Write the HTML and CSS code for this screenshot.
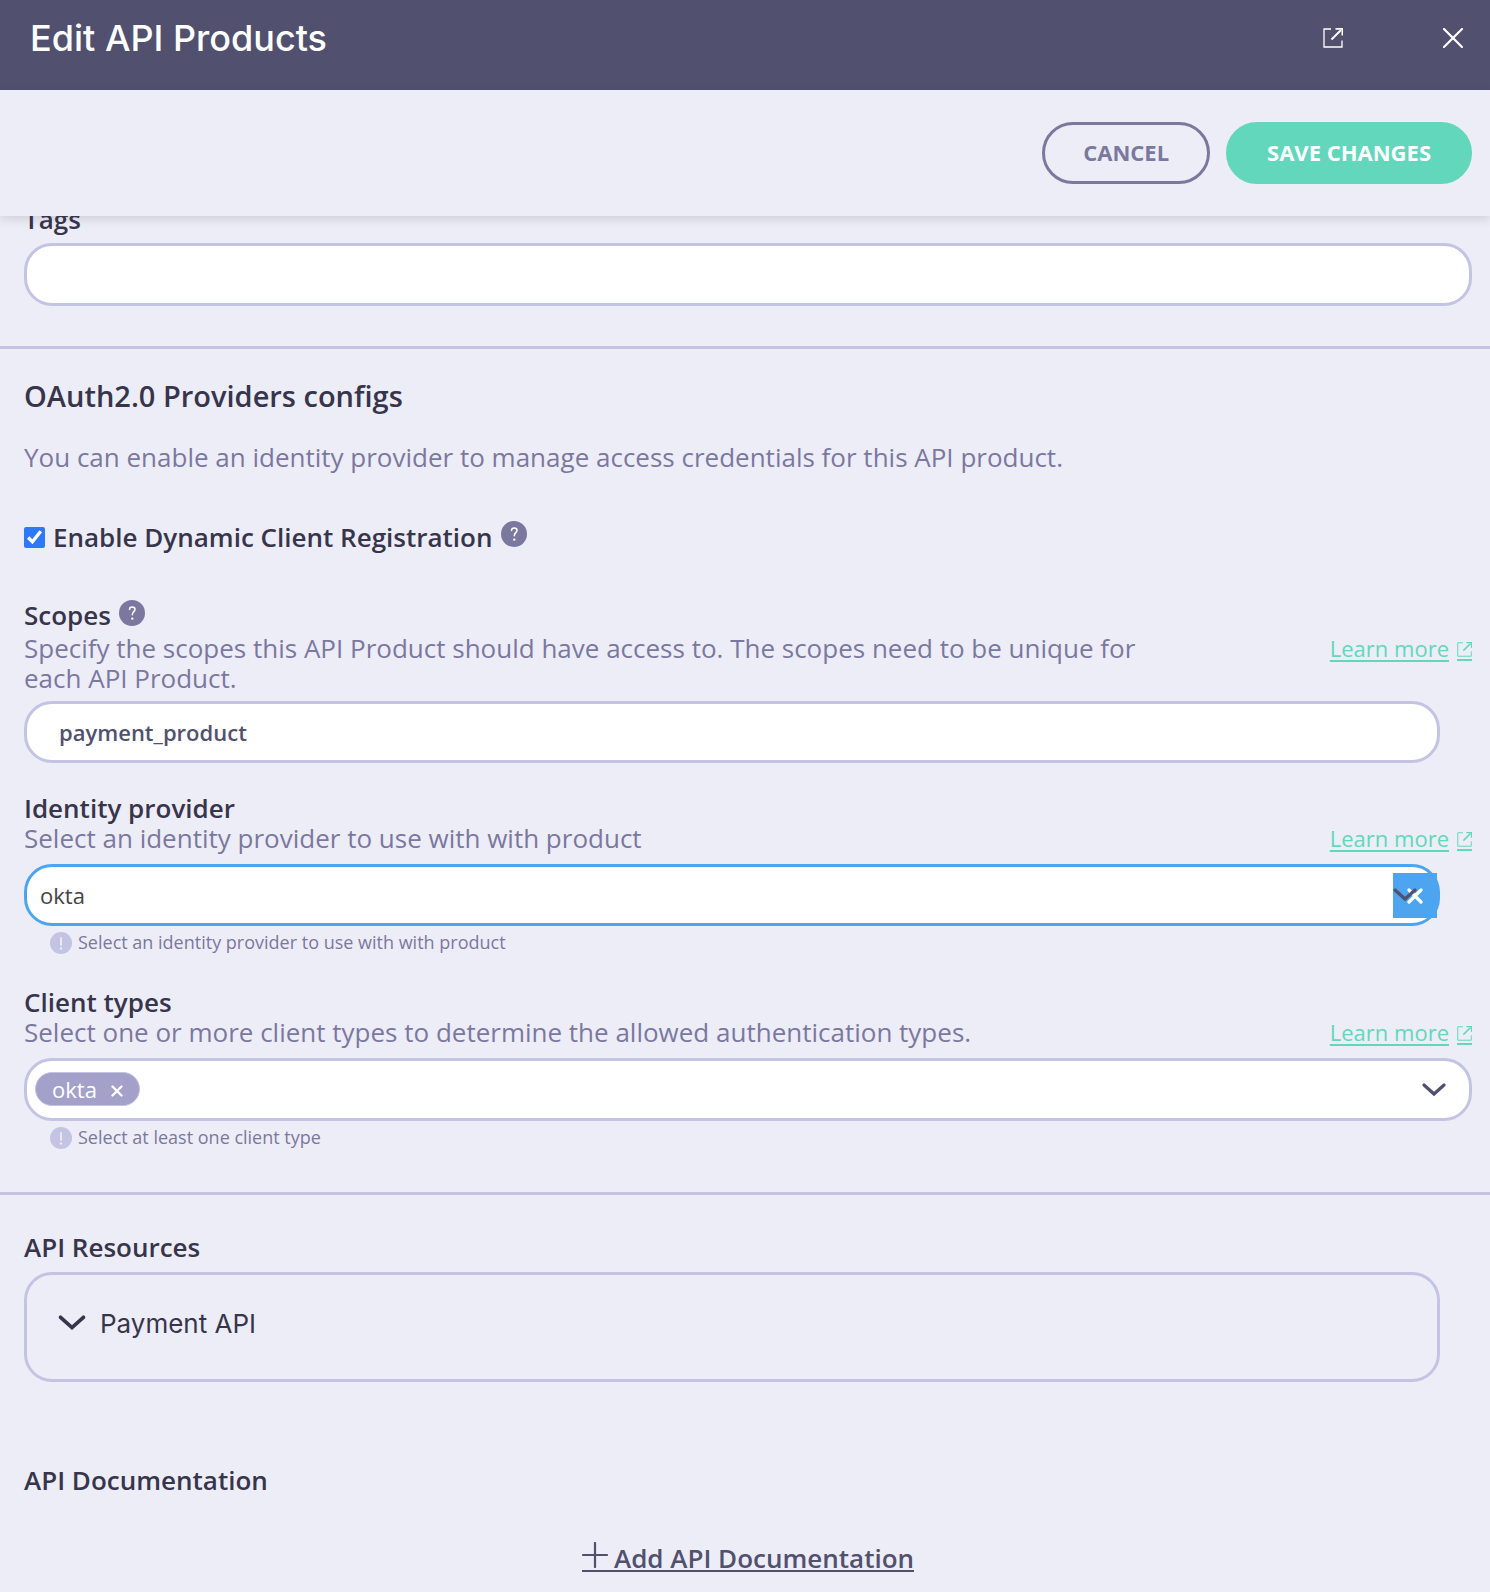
FILE: index.html
```html
<!DOCTYPE html>
<html lang="en">
<head>
<meta charset="utf-8">
<meta name="viewport" content="width=device-width, initial-scale=1">
<title>Edit API Products</title>
<link rel="stylesheet" href="styles.css">
</head>
<body>
<svg class="sprite" aria-hidden="true">
  <symbol id="external" viewBox="0 0 20 20"><path d="M8 1H1V19H19V12.500" fill="none" stroke="currentColor" stroke-width="1.300"/><path d="M8.500 11.500L18 2" fill="none" stroke="currentColor" stroke-width="2"/><path d="M12.500 0H20V7.500H18.500V1.800H12.500Z" fill="currentColor"/></symbol>
  <symbol id="cross" viewBox="0 0 20 20"><path d="M1 1L19 19M19 1L1 19" fill="none" stroke="currentColor" stroke-width="2.200" stroke-linecap="round"/></symbol>
  <symbol id="small-cross" viewBox="0 0 16 16"><path d="M2 2L14 14M14 2L2 14" fill="none" stroke="currentColor" stroke-width="3.200" stroke-linecap="round"/></symbol>
  <symbol id="chevron" viewBox="0 0 24 14"><path d="M2 2L12 11L22 2" fill="none" stroke="currentColor" stroke-width="3.200" stroke-linecap="round"/></symbol>
  <symbol id="plus" viewBox="0 0 26 26"><path d="M13 1V25M1 13H25" fill="none" stroke="currentColor" stroke-width="2.200" stroke-linecap="round"/></symbol>
  <symbol id="question" viewBox="0 0 26 26"><circle cx="13" cy="13" r="13" fill="#7b789f"/><path d="M10.500 9.500C10.500 6.200 16 6.200 16 9.500C16 11.800 13.300 11.600 13.300 14.800" fill="none" stroke="#fff" stroke-width="1.500" stroke-linecap="round"/><circle cx="13.300" cy="18.600" r="1.200" fill="#fff"/></symbol>
  <symbol id="notice" viewBox="0 0 22 22"><circle cx="11" cy="11" r="11" fill="#c3c3e3"/><path d="M11 6V13" fill="none" stroke="#ededf7" stroke-width="1.800" stroke-linecap="round"/><circle cx="11" cy="16.500" r="1.200" fill="#ededf7"/></symbol>
</svg>

<header class="titlebar">
  <h1 class="title">Edit API Products</h1>
  <div class="window-actions">
    <a class="icon-action" href="#" aria-label="Open in new window"><svg class="icon-20"><use href="#external"/></svg></a>
    <button class="icon-action" type="button" aria-label="Close"><svg class="icon-20"><use href="#cross"/></svg></button>
  </div>
</header>
<div class="toolbar">
  <button class="button button-outline" type="button">CANCEL</button>
  <button class="button button-primary" type="submit" form="product">SAVE CHANGES</button>
</div>

<form class="form" id="product">
  <section class="section section-tags">
    <label class="label" for="tags">Tags</label>
    <input class="field" id="tags" type="text">
  </section>

  <section class="section section-oauth">
    <h2 class="heading">OAuth2.0 Providers configs</h2>
    <p class="text intro">You can enable an identity provider to manage access credentials for this API product.</p>
    <div class="check-row">
      <input class="checkbox" id="dcr" type="checkbox" checked>
      <label class="label" for="dcr">Enable Dynamic Client Registration</label>
      <button class="help" type="button" aria-label="About dynamic client registration"><svg class="icon-26"><use href="#question"/></svg></button>
    </div>

    <div class="group">
      <div class="label-row">
        <label class="label" for="scopes">Scopes</label>
        <button class="help" type="button" aria-label="About scopes"><svg class="icon-26"><use href="#question"/></svg></button>
      </div>
      <div class="description">
        <p class="text">Specify the scopes this API Product should have access to. The scopes need to be unique for each API Product.</p>
        <a class="learn" href="#"><span class="learn-text">Learn more</span><span class="learn-icon"><svg class="icon-15"><use href="#external"/></svg></span></a>
      </div>
      <div class="inset inset-close"><input class="field field-strong" id="scopes" type="text" value="payment_product"></div>
    </div>

    <div class="group">
      <label class="label" for="provider">Identity provider</label>
      <div class="description">
        <p class="text">Select an identity provider to use with with product</p>
        <a class="learn" href="#"><span class="learn-text">Learn more</span><span class="learn-icon"><svg class="icon-15"><use href="#external"/></svg></span></a>
      </div>
      <div class="inset select-wrap">
        <select class="field field-active" id="provider"><option>okta</option></select>
        <button class="clear" type="button" aria-label="Clear identity provider"><svg class="icon-16"><use href="#small-cross"/></svg></button>
        <svg class="chevron select-chevron"><use href="#chevron"/></svg>
      </div>
      <p class="hint"><svg class="icon-22"><use href="#notice"/></svg>Select an identity provider to use with with product</p>
    </div>

    <div class="group">
      <label class="label" for="types">Client types</label>
      <div class="description">
        <p class="text">Select one or more client types to determine the allowed authentication types.</p>
        <a class="learn" href="#"><span class="learn-text">Learn more</span><span class="learn-icon"><svg class="icon-15"><use href="#external"/></svg></span></a>
      </div>
      <div class="field multi">
        <span class="chip">okta<button class="chip-remove" type="button" aria-label="Remove okta"><svg class="icon-12"><use href="#small-cross"/></svg></button></span>
        <input class="multi-input" id="types" type="text">
        <button class="toggle" type="button" aria-label="Show client types"><svg class="chevron"><use href="#chevron"/></svg></button>
      </div>
      <p class="hint"><svg class="icon-22"><use href="#notice"/></svg>Select at least one client type</p>
    </div>
  </section>

  <section class="section section-resources">
    <h3 class="label">API Resources</h3>
    <div class="panel">
      <button class="accordion" type="button" aria-expanded="false"><svg class="chevron chevron-large"><use href="#chevron"/></svg>Payment API</button>
    </div>
    <h3 class="label">API Documentation</h3>
    <div class="add-row">
      <a class="add" href="#"><svg class="icon-26"><use href="#plus"/></svg>Add API Documentation</a>
    </div>
  </section>
</form>
</body>
</html>
```
FILE: styles.css
```css
* { box-sizing: border-box; }
body {
  margin: 0;
  background: #ededf7;
  color: #37354b;
  font-family: "Open Sans", "Noto Sans", sans-serif;
  font-size: 26px;
  line-height: 30px;
}
button, input, select { font-family: inherit; margin: 0; }
button { padding: 0; border: 0; background: none; color: inherit; cursor: pointer; }
h1, h2, h3, p { margin: 0; }
a { color: inherit; text-decoration: none; }
svg { display: block; flex: none; }
.sprite { position: absolute; width: 0; height: 0; }

.icon-12 { width: 12px; height: 12px; }
.icon-15 { width: 15px; height: 15px; }
.icon-16 { width: 16px; height: 16px; }
.icon-20 { width: 20px; height: 20px; }
.icon-22 { width: 22px; height: 22px; }
.icon-26 { width: 26px; height: 26px; }

.titlebar {
  display: flex;
  justify-content: space-between;
  align-items: center;
  height: 90px;
  padding: 0 27px 14px 30px;
  background: #51516f;
  color: #fff;
}
.title { font-family: Inter, sans-serif; font-size: 36px; font-weight: 500; line-height: 44px; }
.window-actions { display: flex; gap: 100px; }
.icon-action { display: block; }

.toolbar {
  position: relative;
  z-index: 1;
  display: flex;
  justify-content: flex-end;
  gap: 16px;
  padding: 32px 18px;
  background: #ededf7;
  box-shadow: 0 2px 10px rgba(60, 60, 80, 0.2);
}
.button {
  height: 62px;
  padding: 0 38px 2px;
  border: 3px solid #7b789f;
  border-radius: 31px;
  color: #7b789f;
  font-size: 22px;
  font-weight: 700;
}
.button-primary { border-color: #62d7bb; background: #62d7bb; color: #fff; }

.form { margin-top: -12px; }
.section { padding: 0 18px 0 24px; }
.section + .section { border-top: 3px solid #c3c3e3; }
.section-tags { padding-bottom: 40px; }
.section-oauth { padding-top: 32px; padding-bottom: 40px; }
.section-resources { padding-top: 37px; padding-bottom: 18px; }

.label { display: block; font-size: 26px; font-weight: 600; line-height: 30px; }
.heading { font-size: 29px; font-weight: 600; line-height: 30px; }
.text { color: #7b789f; }
.intro { margin: 31px 0 50px; }

.field {
  display: block;
  width: 100%;
  height: 62px;
  padding: 0 32px;
  border: 3px solid #c3c3e3;
  border-radius: 28px;
  background: #fff;
  outline: 0;
}
.section-tags .field { margin-top: 9px; height: 63px; }
.field-strong { color: #51516f; font-size: 22px; font-weight: 600; }
.field-active {
  padding: 0 13px;
  border-color: #4ca5ee;
  appearance: none;
  color: #444;
  font-size: 22px;
}

.check-row, .label-row { display: flex; align-items: center; gap: 8px; }
.checkbox { width: 21px; height: 21px; accent-color: #2f78f7; }
.help { align-self: flex-start; margin-top: -1px; height: 26px; }
.label-row .help { margin-top: 0; }

.group { margin-top: 30px; }
.check-row + .group { margin-top: 48px; }
.label-row { margin-bottom: 3px; }
.description { display: flex; justify-content: space-between; align-items: flex-start; }
.description .text { max-width: 1130px; }
.inset { margin-top: 11px; padding-right: 32px; }
.inset-close { margin-top: 8px; }
.learn { display: flex; align-items: flex-start; gap: 8px; color: #62d7bb; font-size: 22px; line-height: 30px; }
.learn-text { text-decoration: underline 2px; text-underline-offset: 3px; }
.learn-icon { margin-top: 9px; padding-bottom: 2px; border-bottom: 2px solid; }

.select-wrap { position: relative; }
.clear {
  position: absolute;
  top: 9px;
  right: 35px;
  display: flex;
  align-items: center;
  justify-content: center;
  width: 44px;
  height: 45px;
  background: #4ca5ee;
  color: #fff;
}
.chevron { width: 24px; height: 14px; color: #51516f; }
.select-chevron { position: absolute; top: 24px; right: 55px; pointer-events: none; }

.hint { display: flex; align-items: center; gap: 6px; margin: 5px 0 33px; padding-left: 26px; color: #7b789f; font-size: 18px; line-height: 23px; }
.group:last-child .hint { margin-bottom: 3px; }

.multi { display: flex; align-items: center; height: 63px; margin-top: 11px; padding: 0 23px 0 8px; }
.chip {
  display: flex;
  align-items: center;
  gap: 14px;
  height: 34px;
  margin-bottom: 2px;
  padding: 0 16px;
  border: 1px solid #c3c3e3;
  border-radius: 17px;
  background: #a3a1c9;
  color: #fff;
  font-size: 22px;
}
.chip-remove { margin-top: 4px; }
.multi-input { flex: 1; min-width: 0; height: 40px; border: 0; outline: 0; background: none; font-size: 22px; }

.panel { margin: 10px 32px 83px 0; padding: 26px 31px 34px; border: 3px solid #c3c3e3; border-radius: 28px; }
.accordion { display: flex; align-items: center; gap: 14px; height: 44px; font-family: Inter, sans-serif; font-size: 26px; }
.chevron-large { width: 28px; height: 16px; color: #37354b; }

.add-row { display: flex; justify-content: center; margin-top: 47px; }
.add { display: flex; align-items: flex-end; gap: 6px; border-bottom: 2px solid; color: #51516f; font-weight: 600; line-height: 24px; }
.add .icon-26 { margin-bottom: 2px; }
```
